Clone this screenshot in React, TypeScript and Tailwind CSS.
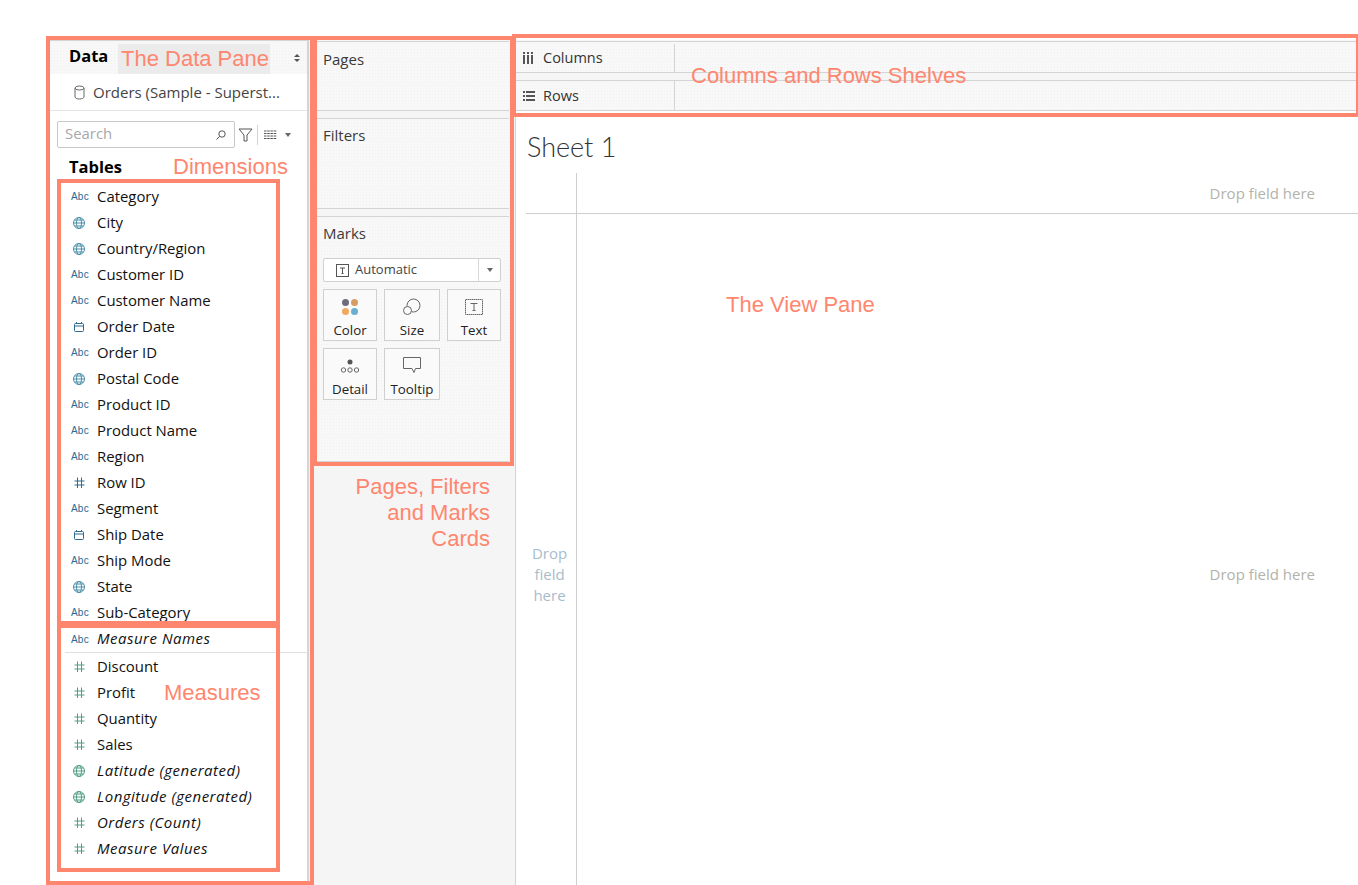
import React from "react";

const sans = "[font-family:'Open_Sans','Liberation_Sans',sans-serif]";
const dots = "bg-[#f8f8f8] bg-[radial-gradient(#f1f1f1_0.6px,transparent_0.7px)] bg-[length:3px_3px]";

const Abc = () => <span className="block w-[18px] pl-[1px] text-center text-[10px] leading-none font-normal tracking-[0.2px] text-[#2a6a90] [font-family:'Liberation_Sans',sans-serif]">Abc</span>;
const Globe = ({ c }: { c: string }) => (
  <svg width="18" height="14" viewBox="0 0 18 14" fill="none" stroke={c} strokeWidth="1">
    <circle cx="9" cy="7" r="5.500" /><ellipse cx="9" cy="7" rx="2.500" ry="5.500" /><path d="M3.500 7h11M4.500 4h9M4.500 10h9" />
  </svg>
);
const Hash = ({ c }: { c: string }) => (
  <svg width="18" height="14" viewBox="0 0 18 14" fill="none" stroke={c} strokeWidth="1">
    <path d="M7.500 1.500v10.500M11.500 1.500v10.500M4.500 5h10M4.500 9h10" />
  </svg>
);
const Cal = () => (
  <svg width="18" height="14" viewBox="0 0 18 14" fill="none" stroke="#2f6b93" strokeWidth="1">
    <rect x="4.500" y="3.500" width="9" height="8" rx="1" /><path d="M4.500 6h9M6.500 2v2M11.500 2v2" />
  </svg>
);

type F = [string, React.ReactNode, boolean?];
const blue = "#4a8fa8", green = "#4f9e86";
const dims: F[] = [
  ["Category", <Abc />], ["City", <Globe c={blue} />], ["Country/Region", <Globe c={blue} />], ["Customer ID", <Abc />],
  ["Customer Name", <Abc />], ["Order Date", <Cal />], ["Order ID", <Abc />], ["Postal Code", <Globe c={blue} />],
  ["Product ID", <Abc />], ["Product Name", <Abc />], ["Region", <Abc />], ["Row ID", <Hash c="#2f6b93" />],
  ["Segment", <Abc />], ["Ship Date", <Cal />], ["Ship Mode", <Abc />], ["State", <Globe c={blue} />], ["Sub-Category", <Abc />],
];
const meas: F[] = [
  ["Discount", <Hash c={green} />], ["Profit", <Hash c={green} />], ["Quantity", <Hash c={green} />], ["Sales", <Hash c={green} />],
  ["Latitude (generated)", <Globe c={green} />, true], ["Longitude (generated)", <Globe c={green} />, true],
  ["Orders (Count)", <Hash c={green} />, true], ["Measure Values", <Hash c={green} />, true],
];

const Row = ({ f }: { f: F }) => (
  <div className="flex h-[26px] items-center pl-[20px]">
    <span className="flex w-[27px] shrink-0">{f[1]}</span>
    <span className={`pb-[2px] text-[#111] whitespace-nowrap ${f[2] ? "text-[15px] italic tracking-[0.5px]" : "text-[14.900px]"}`}>{f[0]}</span>
  </div>
);

const Card = ({ h, label, pt = "pt-[6px]", children }: { h: string; label: string; pt?: string; children?: React.ReactNode }) => (
  <section className={`${h} ${dots} border-y border-[#d4d4d4]`}>
    <div className={`pl-[6px] ${pt} text-[15px] leading-[20px] text-[#3a3a3a]`}>{label}</div>
    {children}
  </section>
);

const MarkBtn = ({ w, label, icon }: { w: string; label: string; icon: React.ReactNode }) => (
  <div className={`${w} h-[52px] bg-[#fafafa] border border-[#d0d0d0] flex flex-col items-center`}>
    <div className="h-[30px] flex items-center justify-center pt-[3px]">{icon}</div>
    <div className="text-[13.300px] leading-[20px] text-[#222]">{label}</div>
  </div>
);

const Shelf = ({ icon, label, className }: { icon: React.ReactNode; label: string; className: string }) => (
  <div className={`flex border-y border-[#d4d4d4] ${dots} ${className}`}>
    <div className="w-[159px] border-r border-[#d4d4d4] flex items-center pl-[7px]">
      <span className="w-[20px]">{icon}</span>
      <span className="text-[14.500px] text-[#333]">{label}</span>
    </div>
  </div>
);

const Note = ({ className, children }: { className: string; children: React.ReactNode }) => (
  <div className={`absolute text-[#ff866e] text-[22px] leading-[26px] [font-family:'Liberation_Sans',sans-serif] whitespace-nowrap ${className}`}>{children}</div>
);
const Box = ({ className }: { className: string }) => <div className={`absolute border-[4px] border-[#ff866e] ${className}`} />;

export default function App() {
  return (
    <div className={`relative w-[1358px] h-[885px] overflow-hidden bg-white flex pt-[40px] pl-[50px] ${sans}`}>
      {/* Data pane */}
      <aside className="w-[259px] shrink-0 border-r-2 border-t border-[#d4d4d4] flex flex-col">
        <div className={`h-[33px] flex items-center pl-[19px] pr-[7px] ${dots}`}>
          <span className="text-[16.500px] font-bold text-black pb-[2px]">Data</span>
          <span className="ml-auto flex flex-col gap-[2px]">
            <span className="block w-0 h-0 border-x-[3px] border-x-transparent border-b-[3px] border-b-[#555]" />
            <span className="block w-0 h-0 border-x-[3px] border-x-transparent border-t-[3px] border-t-[#555]" />
          </span>
        </div>
        <div className="h-[37px] flex items-center pl-[23px] border-b border-[#e4e4e4]">
          <svg width="13" height="15" viewBox="0 0 13 15" fill="none" stroke="#666" className="mr-[7px]">
            <ellipse cx="6.500" cy="3" rx="4.500" ry="2" /><path d="M2 3v9c0 1.100 2 2 4.500 2s4.500-.9 4.500-2V3" />
          </svg>
          <span className="text-[15px] text-[#444] whitespace-nowrap">Orders (Sample - Superst...</span>
        </div>
        <div className="mt-[10px] flex items-center pl-[7px]">
          <div className="w-[178px] h-[27px] border border-[#c8c8c8] rounded-[2px] flex items-center px-[7px] pb-[2px]">
            <span className="text-[14.900px] text-[#a8a8a8]">Search</span>
            <svg className="ml-auto mt-[2px]" width="12" height="12" viewBox="0 0 12 12" fill="none" stroke="#555"><circle cx="7" cy="5" r="3.200" /><path d="M4.600 7.400 1.500 10.500" /></svg>
          </div>
          <svg className="ml-[3px]" width="15" height="15" viewBox="0 0 15 15" fill="none" stroke="#555"><path d="M1 2h13L9 8v6H6V8z" /></svg>
          <span className="ml-[4px] w-px h-[20px] bg-[#d4d4d4]" />
          <svg className="ml-[6px]" width="13" height="10" viewBox="0 0 13 10" stroke="#555"><path d="M0 1h13M0 3.500h13M0 6h13M0 8.500h13" strokeDasharray="2.500 .7" /></svg>
          <span className="ml-[8px] w-0 h-0 border-x-[3.500px] border-x-transparent border-t-[4px] border-t-[#666]" />
        </div>
        <div className="pl-[19px] mt-[6px] h-[26px] text-[16.500px] font-bold leading-[26px] text-black">Tables</div>
        <div className="mt-[4px]">
          {dims.map((f) => <Row key={f[0]} f={f} />)}
        </div>
        <div className="mt-[1px] ml-[15px] border-b border-[#e0e0e0] -mr-[1px] h-[26px] flex items-center pl-[5px]">
          <span className="flex w-[27px] shrink-0"><Abc /></span>
          <span className="pb-[2px] text-[15px] italic tracking-[0.5px] text-[#111]">Measure Names</span>
        </div>
        <div className="mt-[1px]">
          {meas.map((f) => <Row key={f[0]} f={f} />)}
        </div>
      </aside>

      {/* Cards column */}
      <div className="w-[206px] shrink-0 bg-[#f5f5f5] pt-[1px] pl-[8px] pr-[6px] flex flex-col gap-[7px]">
        <Card h="h-[70px]" label="Pages" pt="pt-[7px]" />
        <Card h="h-[91px]" label="Filters" />
        <Card h="h-[246px]" label="Marks">
          <div className="px-[6px] pt-[15px]">
            <div className="h-[24px] w-[178px] border border-[#d0d0d0] rounded-[2px] bg-white flex items-center">
              <svg className="ml-[12px]" width="13" height="13" viewBox="0 0 13 13" fill="none" stroke="#555"><rect x=".5" y=".5" width="12" height="12" /><path d="M4 4h5M6.500 4v5.500M5.500 9.500h2" /></svg>
              <span className="ml-[6px] text-[13px] text-[#444]">Automatic</span>
              <span className="ml-auto w-[22px] h-full border-l border-[#d8d8d8] flex items-center justify-center">
                <span className="w-0 h-0 border-x-[3.500px] border-x-transparent border-t-[4px] border-t-[#666]" />
              </span>
            </div>
            <div className="mt-[7px] grid grid-cols-[54px_56px_54px] gap-x-[7px] gap-y-[7px]">
              <MarkBtn w="w-[54px]" label="Color" icon={
                <svg width="18" height="18" viewBox="0 0 18 18"><circle cx="4.500" cy="4.500" r="3.500" fill="#6f6a7c" /><circle cx="13.500" cy="4.500" r="3.500" fill="#d69c62" /><circle cx="4.500" cy="13.500" r="3.500" fill="#f0a860" /><circle cx="13.500" cy="13.500" r="3.500" fill="#6aaed0" /></svg>
              } />
              <MarkBtn w="w-[56px]" label="Size" icon={
                <svg width="20" height="18" viewBox="0 0 20 18" fill="none" stroke="#666"><circle cx="11.500" cy="7.500" r="6.500" /><circle cx="5.500" cy="12.500" r="4" fill="#fafafa" /></svg>
              } />
              <MarkBtn w="w-[54px]" label="Text" icon={
                <svg width="18" height="16" viewBox="0 0 18 16" fill="none" stroke="#666"><rect x=".5" y=".5" width="17" height="15" strokeDasharray="1.500 .5" /><path d="M5.500 4.500h7M9 4.500v7M7.500 11.500h3" /></svg>
              } />
              <MarkBtn w="w-[54px]" label="Detail" icon={
                <svg width="20" height="16" viewBox="0 0 20 16" fill="none" stroke="#666"><circle cx="10" cy="4" r="2.500" fill="#555" stroke="none" /><circle cx="3.500" cy="12" r="2.200" /><circle cx="10" cy="12" r="2.200" /><circle cx="16.500" cy="12" r="2.200" /></svg>
              } />
              <MarkBtn w="w-[56px]" label="Tooltip" icon={
                <svg width="18" height="17" viewBox="0 0 18 17" fill="none" stroke="#666"><path d="M.5.500h17v11h-5l-1.500 4-2-4H.5z" /></svg>
              } />
            </div>
          </div>
        </Card>
      </div>

      {/* Shelves and view */}
      <main className="flex-1 flex flex-col border-l border-[#d4d4d4] -mr-px">
        <div className="bg-[#f5f5f5] flex flex-col gap-[7px] pt-[1px] mb-[7px]">
          <Shelf className="h-[32px] pt-[2px]" label="Columns" icon={<svg width="11" height="12" viewBox="0 0 11 12" fill="#555"><rect x="0" y="3" width="2" height="9" /><rect x="4" y="3" width="2" height="9" /><rect x="8" y="3" width="2" height="9" /><rect y="0" width="2" height="2" /><rect x="4" width="2" height="2" /><rect x="8" width="2" height="2" /></svg>} />
          <Shelf className="h-[31px]" label="Rows" icon={<svg width="12" height="10" viewBox="0 0 12 10" fill="#555"><rect width="2" height="2" /><rect x="3" width="9" height="2" /><rect y="4" width="2" height="2" /><rect x="3" y="4" width="9" height="2" /><rect y="8" width="2" height="2" /><rect x="3" y="8" width="9" height="2" /></svg>} />
        </div>
        <div className="pl-[11px] pt-[12px] text-[27px] leading-[34px] font-light text-[#333] [font-family:'Lato',sans-serif]">Sheet 1</div>
        <div className="ml-[10px] mt-[9px] flex-1 min-h-0 grid grid-cols-[51px_1fr] grid-rows-[41px_1fr] text-[15px]">
          <div className="border-r border-b border-[#cfcfcf]" />
          <div className="border-b border-[#cfcfcf] text-right pr-[44px] pt-[9px] text-[#b3b3a9]">Drop field here</div>
          <div className="border-r border-[#cfcfcf] text-center pt-[329px] pr-[3px] leading-[21px] text-[#a8bccb]">Drop<br />field<br />here</div>
          <div className="text-right pr-[44px] pt-[349px] text-[#b3b3a9]">Drop field here</div>
        </div>
      </main>

      {/* Annotations laid over the interface */}
      <div className="absolute left-[118px] top-[44px] w-[152px] h-[30px] bg-[#ebebeb]" />
      <Box className="left-[46px] top-[36px] w-[268px] h-[849px]" />
      <Box className="left-[313px] top-[36px] w-[201px] h-[430px]" />
      <Box className="left-[512px] top-[34px] w-[848px] h-[83px]" />
      <Box className="left-[57px] top-[179px] w-[223px] h-[446px]" />
      <Box className="left-[57px] top-[624px] w-[223px] h-[248px]" />
      <Note className="left-[121px] top-[46px]">The Data Pane</Note>
      <Note className="left-[173px] top-[154px]">Dimensions</Note>
      <Note className="left-[164px] top-[680px]">Measures</Note>
      <Note className="left-[691px] top-[63px]">Columns and Rows Shelves</Note>
      <Note className="left-[726px] top-[292px]">The View Pane</Note>
      <Note className="left-[340px] top-[474px] w-[150px] text-right">Pages, Filters<br />and Marks<br />Cards</Note>
    </div>
  );
}
